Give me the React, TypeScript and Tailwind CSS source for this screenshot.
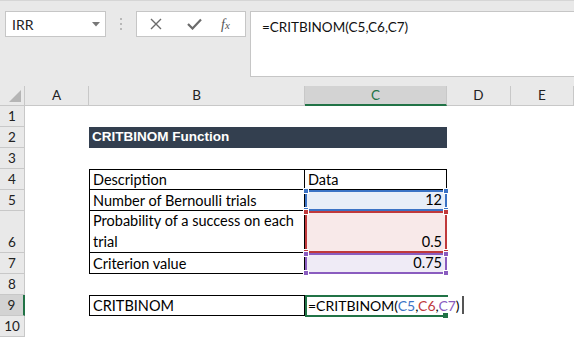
import React from 'react';

const body = "font-['Lato','Liberation_Sans',sans-serif]";

function RowHead({ n, selected }: { n?: number; selected?: boolean }) {
  return (
    <div
      className={`flex items-end justify-center border-b border-r border-[#c8c8c8] text-[13.5px] leading-none text-[#222] ${
        selected ? 'bg-[#d3d3d3] border-r-2 border-r-[#217346]' : 'bg-[#e9e9e9]'
      }`}
    >
      <span className="mb-[3px]">{n}</span>
    </div>
  );
}

function ColHead({ label, selected }: { label: string; selected?: boolean }) {
  return (
    <div
      className={`flex items-center justify-center border-r border-b border-[#c8c8c8] text-[13.5px] ${
        selected ? 'bg-[#d3d3d3] border-b-2 border-b-[#217346] text-[#217346]' : 'bg-[#e9e9e9] text-[#222]'
      }`}
    >
      {label}
    </div>
  );
}

function Handle({ pos, color }: { pos: string; color: string }) {
  return <span className={`absolute h-[6px] w-[6px] border border-white ${pos} ${color}`} />;
}

function RefCell({
  value,
  bg,
  border,
  handle,
}: {
  value: string;
  bg: string;
  border: string;
  handle: string;
}) {
  return (
    <div className={`relative flex items-end justify-end border-2 pr-[3px] ${bg} ${border}`}>
      <span className="leading-[19px]">{value}</span>
      <Handle pos="-left-[4px] -top-[4px]" color={handle} />
      <Handle pos="-right-[4px] -top-[4px]" color={handle} />
      <Handle pos="-left-[4px] -bottom-[4px]" color={handle} />
      <Handle pos="-right-[4px] -bottom-[4px]" color={handle} />
    </div>
  );
}

export default function App() {
  return (
    <div className={`h-[337px] w-[574px] overflow-hidden bg-white ${body}`}>
      {/* formula bar */}
      <div className="flex h-[86px] items-start border-t border-[#d6d6d6] bg-[#e9e9e9] pt-[10px]">
        <div className="ml-[5px] flex h-[26px] w-[101px] items-center justify-between border border-[#c6c6c6] bg-white pl-[6px] pr-[5px] text-[14px] text-[#222]">
          <span>IRR</span>
          <svg width="8" height="5" viewBox="0 0 8 5">
            <path d="M0 0h8L4 4.5z" fill="#777" />
          </svg>
        </div>
        <div className="ml-[14px] mt-[7px] flex flex-col gap-[3px]">
          <span className="h-[2px] w-[2px] bg-[#b8b8b8]" />
          <span className="h-[2px] w-[2px] bg-[#b8b8b8]" />
          <span className="h-[2px] w-[2px] bg-[#b8b8b8]" />
        </div>
        <div className="ml-[14px] flex h-[26px] w-[110px] items-center border border-[#c6c6c6] bg-white">
          <svg className="ml-[13px]" width="12" height="12" viewBox="0 0 12 12">
            <path d="M1 1l10 10M11 1L1 11" stroke="#6b6b6b" strokeWidth="1.4" />
          </svg>
          <svg className="ml-[25px]" width="15" height="12" viewBox="0 0 15 12">
            <path d="M1 6l4.5 4.5L14 1.5" stroke="#6b6b6b" strokeWidth="2.2" fill="none" />
          </svg>
          <span className="ml-[19px] font-['Liberation_Serif',serif] text-[14px] italic text-[#555]">
            f<span className="text-[11px]">x</span>
          </span>
        </div>
        <div className="ml-[4px] h-[66px] flex-1 border border-r-0 border-[#c6c6c6] bg-white pl-[11px] pt-[5px] text-[13.5px] text-[#111]">
          =CRITBINOM(C5,C6,C7)
        </div>
      </div>

      {/* sheet */}
      <div className="grid grid-cols-[25px_64px_216px_142px_64px_1fr] grid-rows-[20px_21px_21px_21px_21px_21px_42px_21px_21px_21px_21px] text-[14.5px] text-black">
        <div className="relative border-r border-b border-[#c8c8c8] bg-[#e9e9e9]">
          <svg className="absolute bottom-[3px] right-[3px]" width="12" height="12" viewBox="0 0 12 12">
            <path d="M12 0V12H0z" fill="#b5b5b5" />
          </svg>
        </div>
        <ColHead label="A" />
        <ColHead label="B" />
        <ColHead label="C" selected />
        <ColHead label="D" />
        <ColHead label="E" />

        {/* row 1 */}
        <RowHead n={1} />
        <div className="col-span-5" />

        {/* row 2 */}
        <RowHead n={2} />
        <div />
        <div className="col-span-2 flex items-center bg-[#333f4f] pl-[3px] font-['Liberation_Sans',sans-serif] text-[13.5px] font-bold text-white">
          CRITBINOM Function
        </div>
        <div className="col-span-2" />

        {/* row 3 */}
        <RowHead n={3} />
        <div className="col-span-5" />

        {/* row 4 */}
        <RowHead n={4} />
        <div />
        <div className="flex items-end border border-black pl-[3px] leading-[19px]">Description</div>
        <div className="flex items-end border-y border-r border-black pl-[3px] leading-[19px]">Data</div>
        <div className="col-span-2" />

        {/* row 5 */}
        <RowHead n={5} />
        <div />
        <div className="flex items-end border-x border-b border-black pl-[3px] leading-[19px]">
          Number of Bernoulli trials
        </div>
        <RefCell value="12" bg="bg-[#e8eef8]" border="border-[#3b73c5]" handle="bg-[#3b73c5]" />
        <div className="col-span-2" />

        {/* row 6 */}
        <RowHead n={6} />
        <div />
        <div className="flex items-end border-x border-b border-black pl-[3px] leading-[21px]">
          Probability of a success on each trial
        </div>
        <RefCell value="0.5" bg="bg-[#f8e9e9]" border="border-[#c0393b]" handle="bg-[#c0393b]" />
        <div className="col-span-2" />

        {/* row 7 */}
        <RowHead n={7} />
        <div />
        <div className="flex items-end border-x border-b border-black pl-[3px] leading-[19px]">Criterion value</div>
        <RefCell value="0.75" bg="bg-[#efebf6]" border="border-[#8a5cbf]" handle="bg-[#8a5cbf]" />
        <div className="col-span-2" />

        {/* row 8 */}
        <RowHead n={8} />
        <div className="col-span-5" />

        {/* row 9 */}
        <RowHead n={9} selected />
        <div />
        <div className="flex items-end border border-black pl-[3px] leading-[19px]">CRITBINOM</div>
        <div className="relative">
          <div className="absolute left-0 top-0 flex h-[22px] w-[143px] items-end border-y-2 border-l-2 border-[#217346] bg-white text-[14px]">
            <span className="shrink-0 whitespace-nowrap pl-[1px] leading-[19px]">
              =CRITBINOM(<span className="text-[#3b73c5]">C5</span>,<span className="text-[#c0393b]">C6</span>,<span className="text-[#8a5cbf]">C7</span>)
            </span>
            <span className="mb-[1px] ml-[2px] h-[18px] w-[2px] shrink-0 bg-[#555]" />
            <span className="absolute -bottom-[3px] right-0 h-[5px] w-[5px] bg-[#217346]" />
          </div>
        </div>
        <div className="col-span-2" />

        {/* row 10 */}
        <RowHead n={10} />
        <div className="col-span-5" />
      </div>
    </div>
  );
}
